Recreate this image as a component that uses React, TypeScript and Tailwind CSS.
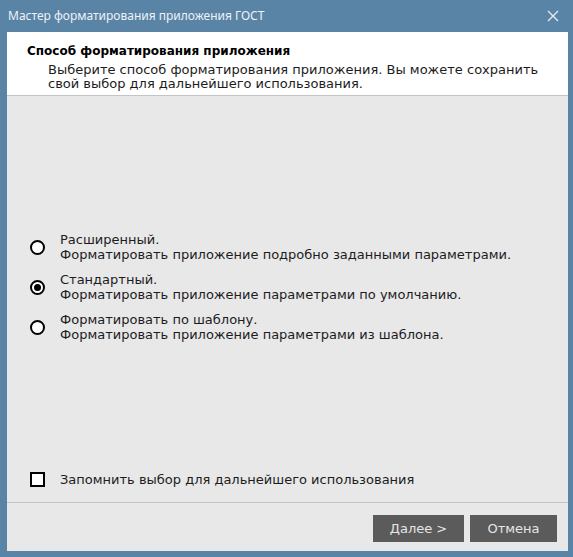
import React from "react";

const font = { fontFamily: '"DejaVu Sans", "Liberation Sans", sans-serif' };
const titleFont = { fontFamily: '"Noto Sans", "Open Sans", sans-serif' };

function Radio({ checked }: { checked?: boolean }) {
  return (
    <div className="w-[15px] h-[15px] rounded-full border-2 border-black bg-white flex items-center justify-center shrink-0">
      {checked && <div className="w-[7px] h-[7px] rounded-full bg-black" />}
    </div>
  );
}

function Option({ title, desc, checked }: { title: string; desc: string; checked?: boolean }) {
  return (
    <div className="flex items-center">
      <div className="w-[53px] flex justify-center pl-[7px]">
        <Radio checked={checked} />
      </div>
      <div className="text-[13px] leading-[15px] text-[#1c1c1c]">
        <div>{title}</div>
        <div>{desc}</div>
      </div>
    </div>
  );
}

export default function App() {
  return (
    <div className="w-[573px] h-[557px] bg-[#5a84a6] flex flex-col overflow-hidden" style={font}>
      <div className="h-[32px] flex items-center justify-between pl-[8px] pr-[14px]">
        <span className="text-[12px] text-[#eef2f6]" style={titleFont}>Мастер форматирования приложения ГОСТ</span>
        <svg width="12" height="12" viewBox="0 0 12 12">
          <path d="M1 1 L11 11 M11 1 L1 11" stroke="#e6edf3" strokeWidth="1.3" />
        </svg>
      </div>
      <div className="ml-[7px] mr-[5px] mb-[6px] flex-1 flex flex-col bg-[#e8e8e9]">
        <div className="bg-white h-[64px] border-b border-[#c4c4c4] pt-[12px] pl-[20px]">
          <div className="text-[12px] font-bold leading-[15px] text-black">Способ форматирования приложения</div>
          <div className="pl-[21px] pt-[4px] text-[13px] leading-[14px] text-[#1c1c1c]">
            <div>Выберите способ форматирования приложения. Вы можете сохранить</div>
            <div>свой выбор для дальнейшего использования.</div>
          </div>
        </div>
        <div className="flex-1 flex flex-col pt-[136px]">
          <div className="flex flex-col gap-[10px]">
            <Option title="Расширенный." desc="Форматировать приложение подробно заданными параметрами." />
            <Option checked title="Стандартный." desc="Форматировать приложение параметрами по умолчанию." />
            <Option title="Форматировать по шаблону." desc="Форматировать приложение параметрами из шаблона." />
          </div>
          <div className="flex-1" />
          <div className="flex items-center pb-[13px]">
            <div className="w-[53px] flex justify-center pl-[7px]">
              <div className="w-[15px] h-[15px] border-2 border-black bg-white" />
            </div>
            <span className="text-[13px] text-[#1c1c1c]">Запомнить выбор для дальнейшего использования</span>
          </div>
        </div>
        <div className="border-t border-[#c4c4c4] h-[49px] flex justify-end items-start pt-[12px] pr-[11px] gap-[6px]">
          <button className="w-[91px] h-[27px] bg-[#5b5b5b] text-[#e6e6e6] text-[13px]" style={font}>Далее &gt;</button>
          <button className="w-[87px] h-[27px] bg-[#5b5b5b] text-[#e6e6e6] text-[13px]" style={font}>Отмена</button>
        </div>
      </div>
    </div>
  );
}
